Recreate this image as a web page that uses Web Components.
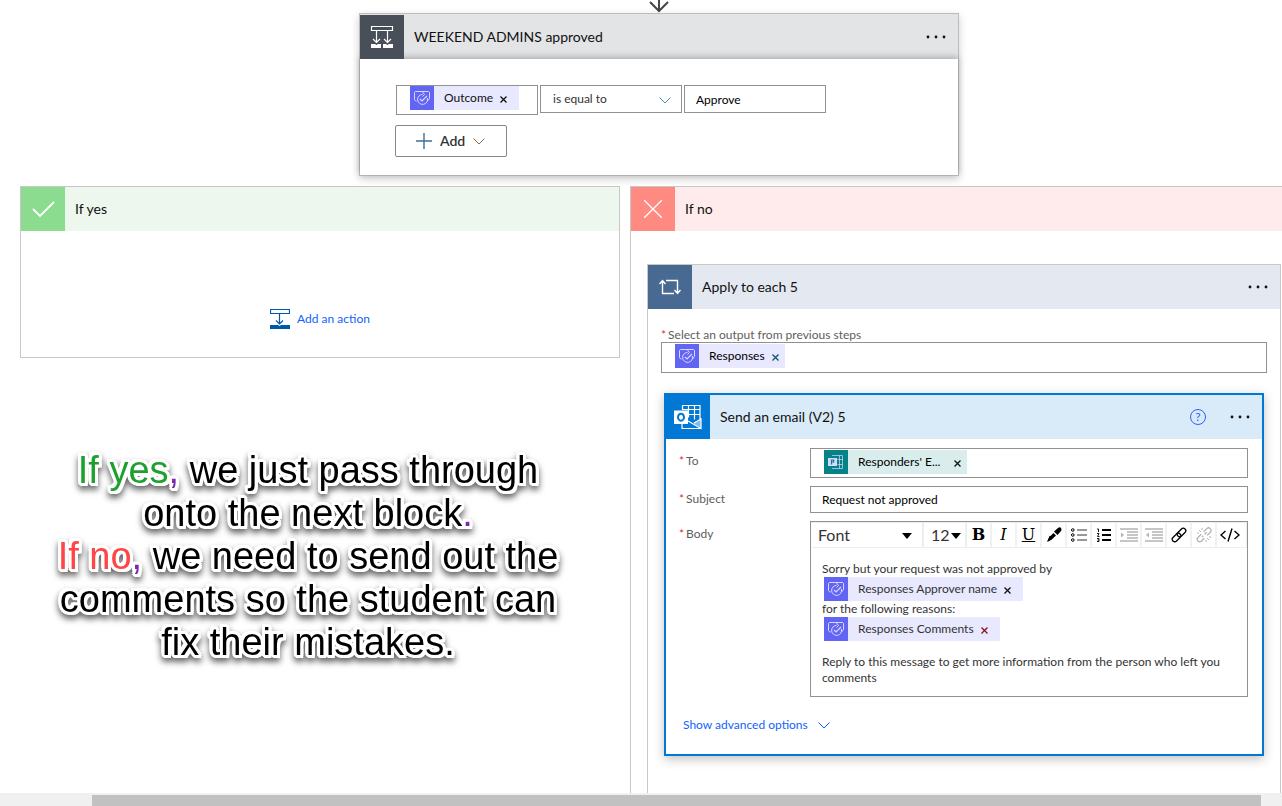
<!DOCTYPE html>
<html lang="en">
<head>
<meta charset="utf-8">
<meta name="viewport" content="width=device-width, initial-scale=1">
<title>Flow designer</title>
<style>
  html, body { margin: 0; height: 100%; }
  body { font: 12px/16px Lato, "Open Sans", sans-serif; color: #111; background: #fff; }
</style>
</head>
<body>
<flow-designer></flow-designer>

<script>
const define = (name, html, setup) => {
  const template = document.createElement('template');
  template.innerHTML = '<style>*{box-sizing:border-box}:host{box-sizing:border-box}button,input,select{font:inherit;color:inherit;margin:0}</style>' + html;
  customElements.define(name, class extends HTMLElement {
    connectedCallback() {
      if (this.shadowRoot) return;
      this.attachShadow({ mode: 'open' }).append(template.content.cloneNode(true));
      if (setup) setup(this, this.shadowRoot);
    }
  });
};

/* name: [width, height, markup] */
const icons = {
  arrow: [20, 13, '<path d="M10 0V11M1 2l9 9 9-9" stroke-width="2"/>'],
  condition: [24, 24, '<path d="M1.5 1.5h21v4h-21zM6.500 6v11M17.500 6v11" stroke-width="1.200"/><path d="M3 14l3.500 3.500L10 14M14 14l3.500 3.500L21 14" stroke-width="1.200"/><path d="M1 19h4l1.500 1L8 19h3v4H1zM13 19h3l1.500 1 1.500-1h4v4H13z" fill="currentColor" stroke="none"/>'],
  check: [24, 16, '<path d="M2 8l7 7L23 1" stroke-width="1.800"/>'],
  cross: [18, 18, '<path d="M0 0l18 18M18 0L0 18" stroke-width="1.300"/>'],
  loop: [22, 16, '<path d="M3.500 2v12.500H15M0.500 5l3-3.500 3 3.500M7 1.500h11.500V14M15.500 11l3 3.500 3-3.500" stroke-width="1.400"/>'],
  approval: [16, 16, '<path d="M2.500 11H1.800L.5 9.700V2.300L1.300 1.500h13.400l.8.800V8.500l-2 2.500" stroke-width="1"/><path d="M8.500 4.400A5 5 0 1 0 13.400 8M8.500 2l2 2.500-2 2" stroke-width="1"/><path d="M6 9l2 2 5-5" stroke-width="1.200"/>'],
  forms: [16, 16, '<path d="M4 1.500h10.500v13H4M9.500 5.500h5M9.500 10.500h5M11.500 1.500v13" stroke-width="1" opacity=".7"/><path d="M0 4h9v8H0z" fill="currentColor" stroke="none"/><path d="M3.500 10.500V6h2.200v2H3.500" stroke="#038387" stroke-width="1.200"/>'],
  outlook: [28, 26, '<path d="M8.500 1.500h17.500v14M8.500 1.500V6M8.500 5.500H26M9 10.500h17M14.500 1.500v12M20.500 1.500v14M8 20v4.500h19M14 17l13 7.500V15l-7 4" stroke-width="1.200"/><path d="M27 15v9l-8-5z" fill="currentColor" opacity=".5" stroke="none"/><path d="M0 6.500h14v13.500H0z" fill="currentColor" stroke="none"/><ellipse cx="7" cy="13.200" rx="3" ry="3.500" stroke="#0078d4" stroke-width="2"/>'],
  action: [20, 20, '<path d="M.5.500h19v4H.5zM9.500 5v10M6 11.500l3.500 3.500 3.500-3.500" stroke-width="1.200"/><path d="M0 16h8l1.500 1 1.500-1h9v4H0z" fill="currentColor" stroke="none"/>'],
  plus: [16, 16, '<path d="M8 0v16M0 8h16" stroke-width="1.400"/>'],
  chevron: [12, 7, '<path d="M.5.500l5.500 5.500 5.500-5.500" stroke-width="1"/>'],
  close: [7, 7, '<path d="M.5.500l6 6M6.500.500l-6 6" stroke-width="1.300"/>'],
  dots: [20, 4, '<g fill="currentColor" stroke="none"><circle cx="2" cy="2" r="1.400"/><circle cx="10" cy="2" r="1.400"/><circle cx="18" cy="2" r="1.400"/></g>'],
  caret: [10, 6, '<path d="M0 0h10L5 6z" fill="currentColor" stroke="none"/>'],
  pen: [16, 16, '<path d="M2 14l2-5 2 2-4 3" stroke-width="1"/><path d="M3.500 10l4-4L10 8.500l-4.500 4.200L1 15zM8 4.500L12 1q2-1.500 3 0t0 3L11.500 8z" fill="currentColor" stroke="none"/>'],
  bullets: [16, 14, '<path d="M6 2h10M6 7h10M6 12h10" stroke="#777" stroke-width="1.300"/><circle cx="1.800" cy="2" r="1.300"/><circle cx="1.800" cy="7" r="1.300"/><circle cx="1.800" cy="12" r="1.300"/>'],
  numbers: [14, 14, '<path d="M5 2h9M5 7h9M5 12h9" stroke-width="1.800"/><path d="M0 1h1.500v3M0 5.500h2L.5 8.500H2.500M0 10.500h2v3H0M.5 12H2" stroke-width=".9"/>'],
  indent: [18, 14, '<path d="M0 1h18M7 4h11M7 7h11M7 10h11M0 13h18" stroke-width="1.300"/><path d="M1 4.500l3 2.500-3 2.500z" fill="currentColor" stroke="none"/>'],
  outdent: [18, 14, '<path d="M0 1h18M7 4h11M7 7h11M7 10h11M0 13h18" stroke-width="1.300"/><path d="M4 4.500L1 7l3 2.500z" fill="currentColor" stroke="none"/>'],
  link: [16, 16, '<g transform="rotate(-45 8 8)" stroke-width="1.300"><rect x="-.5" y="5.500" width="10" height="5" rx="2.500"/><rect x="6.500" y="5.500" width="10" height="5" rx="2.500"/></g>'],
  unlink: [16, 16, '<g transform="rotate(-45 8 8)" stroke-width="1.300"><path d="M6 10.500H2a2.500 2.500 0 0 1 0-5h4.500M10 5.500h4.500a2.500 2.500 0 0 1 0 5H10M5 8h2M9 8h3"/></g><path d="M3 3l2 2M6 1v2M1 6h2M11 11l2 2M10 13v2M13 10h2" stroke-width="1"/>'],
  code: [20, 14, '<path d="M5.500 3L1 7l4.500 4M14.500 3L19 7l-4.500 4M12 .5L8 13.500" stroke-width="1.400"/>']
};

define('flow-icon', '<style>:host{display:inline-flex;flex:none}svg{display:block;fill:none;stroke:currentColor}</style><svg aria-hidden="true"></svg>', (host, root) => {
  const [w, h, markup] = icons[host.getAttribute('name')];
  const svg = root.querySelector('svg');
  svg.setAttribute('width', w);
  svg.setAttribute('height', h);
  svg.setAttribute('viewBox', `0 0 ${w} ${h}`);
  svg.innerHTML = markup;
});

/* Titled bar with a square icon, followed by slotted content */
define('flow-card', `
<style>
  :host { display: block; border: 1px solid var(--line, #c8c8c8); background: #fff; }
  header { display: flex; align-items: center; padding-top: var(--bar-top, 0); background: var(--bar); }
  .tile { display: flex; flex: none; align-items: center; justify-content: center; width: 44px; height: 44px; background: var(--tile); color: #fff; }
  h2 { flex: 1; margin: 0; padding-left: 10px; font: inherit; font-size: 14px; line-height: 20px; }
  button { border: 0; padding: 8px 0; background: none; display: flex; }
  .menu { padding-right: 12px; }
  :host(:not([menu])) .menu { display: none; }
</style>
<header><span class="tile"></span><h2></h2><slot name="tools"></slot>
<button class="menu" aria-label="More commands"><flow-icon name="dots"></flow-icon></button></header>
<slot></slot>`, (host, root) => {
  root.querySelector('.tile').innerHTML = `<flow-icon name="${host.getAttribute('icon')}"></flow-icon>`;
  root.querySelector('h2').textContent = host.getAttribute('heading');
});

define('flow-token', `
<style>
  :host { display: inline-flex; align-items: center; height: 24px; background: var(--token, #e8e8ff); color: inherit; white-space: nowrap; vertical-align: top; }
  .tile { display: flex; align-items: center; justify-content: center; width: 24px; height: 24px; background: var(--token-tile, #6264f4); color: #d8d8ff; }
  .text { padding-left: 10px; }
  button { display: flex; border: 0; background: none; padding: 10px 6px 7px 7px; color: var(--x, #111); }
  :host([wide]) button { padding-right: 12px; }
</style>
<span class="tile"></span><span class="text"><slot></slot></span>
<button aria-label="Remove"><flow-icon name="close"></flow-icon></button>`, (host, root) => {
  root.querySelector('.tile').innerHTML = `<flow-icon name="${host.getAttribute('icon') || 'approval'}"></flow-icon>`;
});

define('condition-row', `
<style>
  :host { display: block; padding: 26px 36px 18px; }
  .row { display: grid; grid-template-columns: repeat(3, 142px); gap: 2px; align-items: start; }
  .box, input, select { width: 100%; height: 28px; border: 1px solid #919191; border-radius: 0; background: #fff; }
  .box { height: 30px; padding-left: 13px; }
  .pick { position: relative; }
  input { padding: 0 11px; color: #000; }
  select { appearance: none; padding: 0 12px; color: #333; }
  .pick flow-icon { position: absolute; right: 11px; top: 12px; color: #4a8db0; pointer-events: none; }
  .add { display: flex; align-items: center; gap: 8px; width: 112px; height: 32px; margin: 10px 0 0 -1px; padding: 0 20px; border: 1px solid #8a8886; border-radius: 2px; background: #fff; font-size: 14px; font-weight: 600; color: #333; }
  .add flow-icon:first-child { color: #3f6f94; }
  .add flow-icon:last-child { color: #8a6a42; }
</style>
<div class="row">
  <div class="box"><flow-token wide>Outcome</flow-token></div>
  <div class="pick"><select aria-label="Operator"><option>is equal to</option></select><flow-icon name="chevron"></flow-icon></div>
  <input aria-label="Value" value="Approve">
</div>
<button class="add"><flow-icon name="plus"></flow-icon><span>Add</span><flow-icon name="chevron"></flow-icon></button>`);

define('add-action', `
<style>
  :host { display: flex; justify-content: center; padding: 78px 0 28px; }
  button { display: flex; align-items: center; gap: 7px; border: 0; padding: 0; background: none; color: #0f62fe; }
  flow-icon { color: #0058ad; }
</style>
<button><flow-icon name="action"></flow-icon><span>Add an action</span></button>`);

define('flow-note', `
<style>
  :host { display: block; padding: 91px 24px 0 0; }
  p { margin: 0; text-align: center; color: #000; font: 38px/43px "Liberation Sans", Arial, sans-serif;
    filter: drop-shadow(2px 0 0 #fff) drop-shadow(-2px 0 0 #fff) drop-shadow(0 2px 0 #fff) drop-shadow(0 -2px 0 #fff) drop-shadow(1px 1px 0 #fff) drop-shadow(-1px -1px 0 #fff) drop-shadow(0 4px 3px rgba(0,0,0,.6)); }
  .yes { color: #1ea02e; } .no { color: #ff4545; } .mark { color: #7a2aa8; }
</style>
<p><span class="yes">If yes</span><span class="mark">,</span> we just pass through<br>onto the next block<span class="mark">.</span><br><span class="no">If no</span><span class="mark">,</span> we need to send out the<br>comments so the student can<br>fix their mistakes.</p>`);

define('field-label', `
<style>:host { display: block; color: #605e5c; } i { font-style: normal; color: #e0303c; margin-right: 2px; }</style>
<i>*</i><slot></slot>`);

define('rich-editor', `
<style>
  :host { display: block; border: 1px solid #919191; padding-bottom: 10px; color: #333; }
  .bar { display: flex; height: 26px; border: 1px solid #eee; border-left: 0; color: #000; }
  .pick { position: relative; flex: none; border-right: 2px solid #eee; }
  select { appearance: none; width: 100%; height: 24px; border: 0; background: none; padding: 0 7px; font-size: 16px; line-height: 20px; color: #333; }
  .pick flow-icon { position: absolute; right: 10px; top: 10px; pointer-events: none; }
  .size flow-icon { right: 4px; }
  .font { width: 113px; } .size { width: 43px; }
  .bar button { flex: 0 1 25px; min-width: 0; display: flex; align-items: center; justify-content: center; border: 0; border-right: 2px solid #f1f1f1; background: none; padding: 0; font: 16px/20px "DejaVu Serif", serif; }
  .bar button:last-child { border: 0; }
  .bar button:disabled { color: #b4b4b4; }
  .b { font-weight: 700; } .i { font-style: italic; } .u { text-decoration: underline; }
  .text { padding: 13px 12px 0 11px; }
  .text p { margin: 0; }
  .text div { height: 24px; padding-left: 2px; }
  .text p.last { margin-top: 13px; }
</style>
<div class="bar">
  <div class="pick font"><select aria-label="Font"><option>Font</option></select><flow-icon name="caret"></flow-icon></div>
  <div class="pick size"><select aria-label="Font size"><option>12</option></select><flow-icon name="caret"></flow-icon></div>
  <button aria-label="Bold"><span class="b">B</span></button><button aria-label="Italic"><span class="i">I</span></button><button aria-label="Underline"><span class="u">U</span></button>
  <button aria-label="Colour"><flow-icon name="pen"></flow-icon></button>
  <button aria-label="Bulleted list"><flow-icon name="bullets"></flow-icon></button>
  <button aria-label="Numbered list"><flow-icon name="numbers"></flow-icon></button>
  <button aria-label="Indent" disabled><flow-icon name="indent"></flow-icon></button>
  <button aria-label="Outdent" disabled><flow-icon name="outdent"></flow-icon></button>
  <button aria-label="Link"><flow-icon name="link"></flow-icon></button>
  <button aria-label="Unlink" disabled><flow-icon name="unlink"></flow-icon></button>
  <button aria-label="Code view"><flow-icon name="code"></flow-icon></button>
</div>
<div class="text">
  <p>Sorry but your request was not approved by</p>
  <div><flow-token wide>Responses Approver name</flow-token></div>
  <p>for the following reasons:</p>
  <div><flow-token wide style="--x:#8b1020">Responses Comments</flow-token></div>
  <p class="last">Reply to this message to get more information from the person who left you comments</p>
</div>`);

define('email-form', `
<style>
  :host { display: block; padding: 9px 14px 21px 13px; }
  .grid { display: grid; grid-template-columns: 131px minmax(0, 1fr); row-gap: 8px; }
  field-label { padding-top: 5px; }
  .box { height: 30px; border: 1px solid #919191; padding: 1px 13px; color: #000; }
  input { width: 100%; height: 27px; border: 1px solid #919191; padding: 0 11px; color: #000; }
  .more { display: flex; align-items: center; gap: 10px; margin: 20px 0 0 4px; border: 0; padding: 0; background: none; color: #0f62fe; }
  flow-token { --token: #d9eeec; --token-tile: #038387; }
</style>
<div class="grid">
  <field-label>To</field-label><div class="box"><flow-token icon="forms"><span style="padding-right:7px">Responders' E...</span></flow-token></div>
  <field-label><label for="subject">Subject</label></field-label><input id="subject" aria-label="Subject" value="Request not approved">
  <field-label>Body</field-label><rich-editor></rich-editor>
</div>
<button class="more"><span>Show advanced options</span><flow-icon name="chevron"></flow-icon></button>`);

define('flow-designer', `
<style>
  :host { display: flex; flex-direction: column; min-height: 100vh; }
  main { flex: 1; display: flex; flex-direction: column; overflow: hidden; }
  .canvas { flex: 1; display: flex; flex-direction: column; margin: 0 -16px 0 20px; }
  .arrow { display: flex; justify-content: center; height: 13px; color: #484644; }
  .condition { width: 600px; align-self: center; --bar: #e3e4e6; --tile: #484f58; --line: #bcbcbc; --bar-top: 1px; box-shadow: 0 3px 8px rgba(0,0,0,.2); }
  condition-row { box-shadow: 0 -2px 6px rgba(0,0,0,.25); }
  .branches { flex: 1; display: grid; grid-template-columns: 600px minmax(0, 1fr); gap: 10px; margin-top: 10px; }
  .yes { --bar: #edf7ee; --tile: #8bdc8e; }
  .no { --bar: #ffebeb; --tile: #ff8a82; border-bottom: 0; display: flex; flex-direction: column; }
  .each { flex: 1; margin: 33px 16px 0; --bar: #e4e8f0; --tile: #486991; border-bottom: 0; }
  .output { padding: 19px 13px 20px; }
  .output field-label { line-height: 14px; }
  .box { height: 31px; border: 1px solid #919191; padding: 1px 13px; color: #000; }
  .mail { margin: 0 16px 37px; --bar: #d9eaf8; --tile: #0078d4; --line: #0078d4; border-width: 2px; box-shadow: 0 3px 10px rgba(0,0,0,.25); }
  .help { display: flex; align-items: center; justify-content: center; width: 16px; height: 16px; margin-right: 24px; padding: 0; border: 1px solid #2f5fff; border-radius: 50%; background: none; color: #2f5fff; font-size: 12px; line-height: 14px; }
  .scroll { height: 13px; padding: 2px 21px 0 92px; background: #f0f0f0; }
  .thumb { height: 11px; background: #c1c1c1; }
</style>
<main><div class="canvas">
  <div class="arrow"><flow-icon name="arrow"></flow-icon></div>
  <flow-card class="condition" icon="condition" heading="WEEKEND ADMINS approved" menu><condition-row></condition-row></flow-card>
  <div class="branches">
    <section>
      <flow-card class="yes" icon="check" heading="If yes"><add-action></add-action></flow-card>
      <flow-note></flow-note>
    </section>
    <flow-card class="no" icon="cross" heading="If no">
      <flow-card class="each" icon="loop" heading="Apply to each 5" menu>
        <div class="output">
          <field-label>Select an output from previous steps</field-label>
          <div class="box"><flow-token style="--x:#0f5570">Responses</flow-token></div>
        </div>
        <flow-card class="mail" icon="outlook" heading="Send an email (V2) 5" menu>
          <button class="help" slot="tools" aria-label="Help">?</button>
          <email-form></email-form>
        </flow-card>
      </flow-card>
    </flow-card>
  </div>
</div></main>
<div class="scroll"><div class="thumb"></div></div>`);
</script>
</body>
</html>
